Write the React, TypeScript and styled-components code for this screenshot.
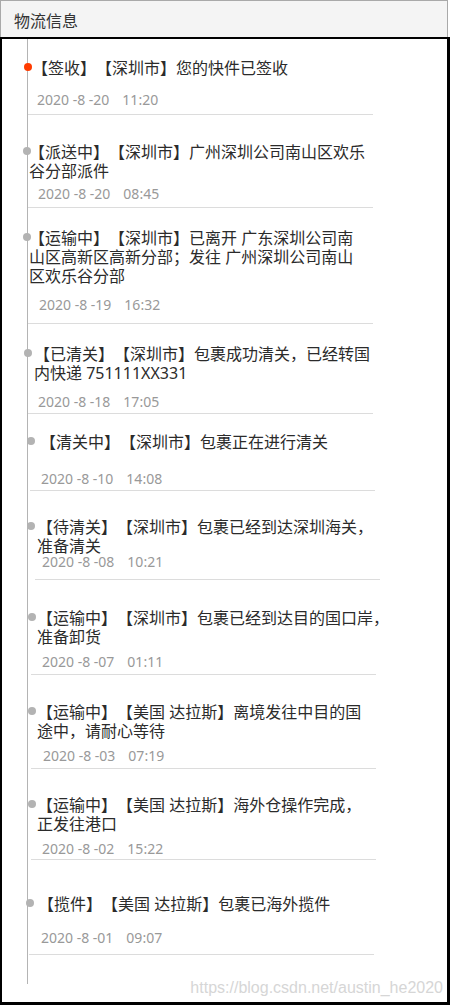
import React from "react";
import styled, { createGlobalStyle } from "styled-components";

const GlobalStyle = createGlobalStyle`
  html, body {
    margin: 0;
    padding: 0;
    background: #ffffff;
  }
  body {
    font-family: "Noto Sans", "Noto Sans CJK SC", sans-serif;
  }
`;

type Entry = {
  lines: string[];
  date: string;
  time: string;
  active?: boolean;
  shift: number;
  textX: number;
  dateX: number;
  dot: number;
  pt: number;
  gap: number;
  pb: number;
};

const entries: Entry[] = [
  { lines: ["【签收】【深圳市】您的快件已签收"], date: "2020 -8 -20", time: "11:20", active: true, shift: 0, textX: 4, dateX: 9, dot: 0, pt: 20, gap: 13, pb: 5 },
  { lines: ["【派送中】【深圳市】广州深圳公司南山区欢乐", "谷分部派件"], date: "2020 -8 -20", time: "08:45", shift: 0, textX: 1, dateX: 10, dot: -1, pt: 28, gap: 4, pb: 4 },
  { lines: ["【运输中】【深圳市】已离开 广东深圳公司南", "山区高新区高新分部；发往 广州深圳公司南山", "区欢乐谷分部"], date: "2020 -8 -19", time: "16:32", shift: 0, textX: 1, dateX: 11, dot: -1, pt: 21, gap: 10, pb: 9 },
  { lines: ["【已清关】【深圳市】包裹成功清关，已经转国", "内快递 751111XX331"], date: "2020 -8 -18", time: "17:05", shift: 0, textX: 6, dateX: 10, dot: 0, pt: 21, gap: 10, pb: 2 },
  { lines: ["【清关中】【深圳市】包裹正在进行清关"], date: "2020 -8 -10", time: "14:08", shift: 2, textX: 10, dateX: 11, dot: 1, pt: 19, gap: 18, pb: 2 },
  { lines: ["【待清关】【深圳市】包裹已经到达深圳海关，", "准备清关"], date: "2020 -8 -08", time: "10:21", shift: 7, textX: 2, dateX: 7, dot: -4, pt: 27, gap: -3, pb: 8 },
  { lines: ["【运输中】【深圳市】包裹已经到达目的国口岸，", "准备卸货"], date: "2020 -8 -07", time: "01:11", shift: 3, textX: 6, dateX: 11, dot: 1, pt: 29, gap: 6, pb: 3 },
  { lines: ["【运输中】【美国 达拉斯】离境发往中目的国", "途中，请耐心等待"], date: "2020 -8 -03", time: "07:19", shift: 3, textX: 6, dateX: 12, dot: 1, pt: 28, gap: 6, pb: 3 },
  { lines: ["【运输中】【美国 达拉斯】海外仓操作完成，", "正发往港口"], date: "2020 -8 -02", time: "15:22", shift: 3, textX: 6, dateX: 11, dot: 1, pt: 27, gap: 6, pb: 1 },
  { lines: ["【揽件】【美国 达拉斯】包裹已海外揽件"], date: "2020 -8 -01", time: "09:07", shift: 1, textX: 9, dateX: 12, dot: 1, pt: 35, gap: 15, pb: 7 },
];

const Page = styled.div`
  position: relative;
  width: 451px;
  height: 1007px;
  background: #ffffff;
  overflow: hidden;
`;

const Header = styled.div`
  box-sizing: border-box;
  width: 448px;
  height: 37px;
  display: flex;
  align-items: center;
  padding: 2px 0 0 13px;
  background: #f4f4f4;
  border: 1px solid #a9a9a9;
  border-bottom: none;
  font-size: 16px;
  color: #333333;
`;

const Panel = styled.div`
  box-sizing: border-box;
  width: 450px;
  height: 968px;
  border-top: 2px solid #000000;
  border-left: 2px solid #000000;
  border-right: 3px solid #000000;
  border-bottom: 3px solid #000000;
`;

const Timeline = styled.div`
  margin-left: 25px;
  padding-bottom: 29px;
  border-left: 1px solid #b4b4b4;
`;

const Item = styled.div<{ $shift: number; $pt: number; $pb: number }>`
  position: relative;
  box-sizing: border-box;
  width: 345px;
  margin-left: ${(p) => p.$shift}px;
  padding-top: ${(p) => p.$pt}px;
  padding-bottom: ${(p) => p.$pb}px;
  border-bottom: 1px solid #dcdcdc;
`;

const Dot = styled.span<{ $active?: boolean; $x: number; $y: number }>`
  position: absolute;
  left: ${(p) => p.$x - 4}px;
  top: ${(p) => p.$y}px;
  width: 8px;
  height: 8px;
  border-radius: 50%;
  background: ${(p) => (p.$active ? "#ff3c00" : "#b3b3b3")};
`;

const Title = styled.div<{ $indent: number }>`
  margin-left: ${(p) => p.$indent}px;
  font-size: 16px;
  line-height: 19px;
  color: #2b2b2b;
  text-spacing-trim: space-all;
`;

const Line = styled.div`
  white-space: nowrap;
`;

const DateRow = styled.div<{ $indent: number; $gap: number }>`
  margin-left: ${(p) => p.$indent}px;
  margin-top: ${(p) => p.$gap}px;
  font-size: 14px;
  line-height: 18px;
  color: #999999;
  white-space: pre;
`;

const Time = styled.span`
  margin-left: 13px;
`;

const Watermark = styled.div`
  position: absolute;
  right: 8px;
  bottom: 10px;
  font-family: "Liberation Sans", Arial, sans-serif;
  font-size: 16px;
  line-height: 18px;
  color: #d6d6d6;
`;

export default function App() {
  return (
    <>
      <GlobalStyle />
      <Page>
        <Header>物流信息</Header>
        <Panel>
          <Timeline>
            {entries.map((e, i) => (
              <Item key={i} $shift={e.shift} $pt={e.pt} $pb={e.pb}>
                <Dot $active={e.active} $x={e.dot} $y={e.pt + 4} />
                <Title $indent={e.textX}>
                  {e.lines.map((l, j) => (
                    <Line key={j}>{l}</Line>
                  ))}
                </Title>
                <DateRow $indent={e.dateX} $gap={e.gap}>
                  {e.date}
                  <Time>{e.time}</Time>
                </DateRow>
              </Item>
            ))}
          </Timeline>
        </Panel>
        <Watermark>https://blog.csdn.net/austin_he2020</Watermark>
      </Page>
    </>
  );
}
